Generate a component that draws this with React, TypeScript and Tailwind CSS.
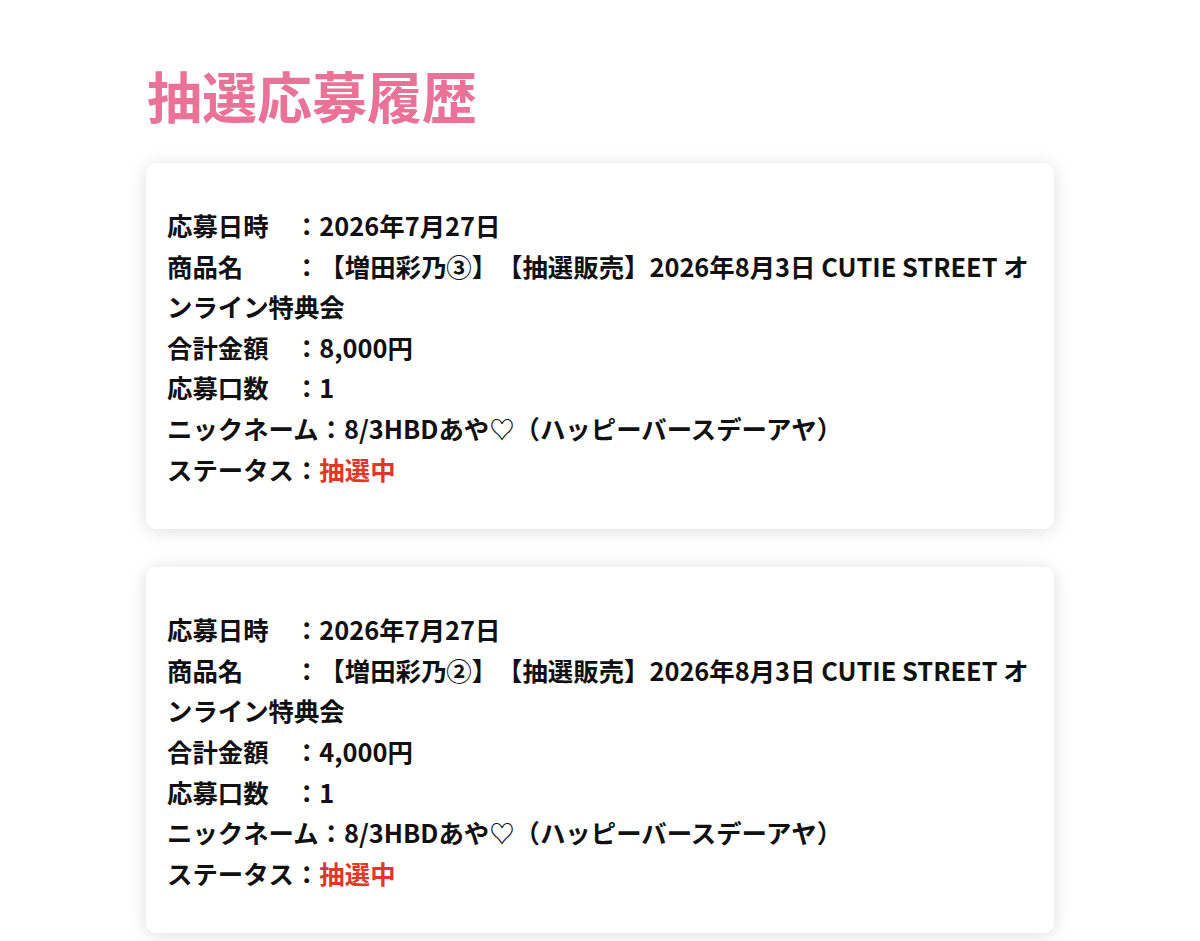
import React from "react";

type Entry = {
  date: string;
  product: string;
  total: string;
  count: string;
  nickname: string;
  status: string;
};

const entries: Entry[] = [
  {
    date: "2026年7月27日",
    product: "【増田彩乃③】【抽選販売】2026年8月3日 CUTIE STREET オンライン特典会",
    total: "8,000円",
    count: "1",
    nickname: "8/3HBDあや♡（ハッピーバースデーアヤ）",
    status: "抽選中",
  },
  {
    date: "2026年7月27日",
    product: "【増田彩乃②】【抽選販売】2026年8月3日 CUTIE STREET オンライン特典会",
    total: "4,000円",
    count: "1",
    nickname: "8/3HBDあや♡（ハッピーバースデーアヤ）",
    status: "抽選中",
  },
];

const EntryCard: React.FC<{ entry: Entry }> = ({ entry }) => (
  <div className="bg-white rounded-[10px] shadow-[0_2px_18px_rgba(0,0,0,0.13)] pl-[21px] pr-5 pt-[42px] pb-[40px] text-[25.4px] leading-[40.6px] font-bold text-[#111] [text-spacing-trim:space-all]">
    <p>応募日時　：{entry.date}</p>
    <p>商品名　　：{entry.product}</p>
    <p>合計金額　：{entry.total}</p>
    <p>応募口数　：{entry.count}</p>
    <p>ニックネーム：{entry.nickname}</p>
    <p>
      ステータス：<span className="text-[#e4352a]">{entry.status}</span>
    </p>
  </div>
);

export default function App() {
  return (
    <div
      className="min-h-screen bg-white"
      style={{ fontFamily: '"Noto Sans CJK JP", "Noto Sans", sans-serif' }}
    >
      <div className="mx-auto w-[908px] pt-[54px]">
        <h1 className="text-[55px] leading-[80px] font-bold text-[#ea7198] pl-[1px] mb-[29px]">
          抽選応募履歴
        </h1>
        <div className="flex flex-col gap-[38px]">
          {entries.map((e, i) => (
            <EntryCard key={i} entry={e} />
          ))}
        </div>
      </div>
    </div>
  );
}
